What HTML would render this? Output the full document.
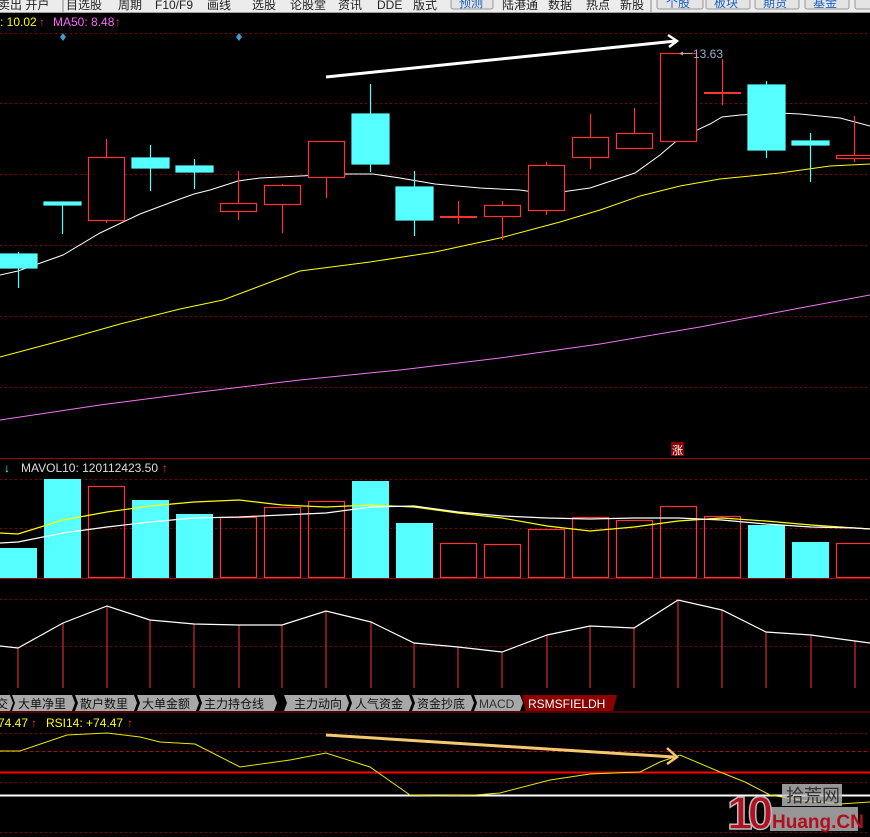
<!DOCTYPE html>
<html><head><meta charset="utf-8"><style>
html,body{margin:0;padding:0;background:#000;width:870px;height:837px;overflow:hidden}
svg{display:block}
text{font-family:"Liberation Sans","Noto Sans CJK SC",sans-serif}
</style></head><body>
<svg width="870" height="837" viewBox="0 0 870 837" xmlns="http://www.w3.org/2000/svg">
<rect width="870" height="837" fill="#000"/>
<!-- toolbar -->
<rect x="0" y="0" width="870" height="12" fill="#ececec"/>
<line x1="0" y1="12.5" x2="870" y2="12.5" stroke="#a0a0a0"/>
<g font-size="12" fill="#222">
<text x="-2" y="9">卖出 开户</text>
<text x="66" y="9">目选股</text><text x="118" y="9">周期</text><text x="155" y="9">F10/F9</text>
<text x="207" y="9">画线</text><text x="252" y="9">选股</text><text x="290" y="9">论股堂</text>
<text x="338" y="9">资讯</text><text x="377" y="9">DDE</text><text x="413" y="9">版式</text>
<text x="502" y="9">陆港通</text><text x="548" y="9">数据</text><text x="586" y="9">热点</text><text x="620" y="9">新股</text>
</g>
<line x1="63" y1="0" x2="63" y2="12" stroke="#888"/>
<line x1="651" y1="0" x2="651" y2="12" stroke="#888"/>
<g fill="#e4e4e4" stroke="#999">
<rect x="451" y="-4" width="42" height="13" rx="2"/>
<rect x="657" y="-4" width="46" height="13" rx="2"/>
<rect x="706" y="-4" width="44" height="13" rx="2"/>
<rect x="755" y="-4" width="44" height="13" rx="2"/>
<rect x="805" y="-4" width="44" height="13" rx="2"/>
<rect x="855" y="-4" width="20" height="13" rx="2"/>
</g>
<g font-size="12" fill="#1a5fc0">
<text x="459" y="7">预测</text><text x="666" y="7">个股</text><text x="714" y="7">板块</text>
<text x="763" y="7">期货</text><text x="813" y="7">基金</text>
</g>
<!-- main header -->
<text x="0" y="26" font-size="12" fill="#ffff00">: 10.02</text>
<text x="39" y="26" font-size="12" fill="#ff3333" font-weight="bold">↑</text>
<text x="53" y="26" font-size="12" fill="#ff66ff">MA50: 8.48</text>
<text x="115" y="26" font-size="12" fill="#ff3333" font-weight="bold">↑</text>
<!-- grid -->
<g stroke="#8b0000" stroke-dasharray="2,3" stroke-width="1">
<line x1="0" y1="33.5" x2="870" y2="33.5"/><line x1="0" y1="103.5" x2="870" y2="103.5"/>
<line x1="0" y1="174.5" x2="870" y2="174.5"/><line x1="0" y1="245.5" x2="870" y2="245.5"/>
<line x1="0" y1="316.5" x2="870" y2="316.5"/><line x1="0" y1="387.5" x2="870" y2="387.5"/>
<line x1="0" y1="479.5" x2="870" y2="479.5"/><line x1="0" y1="528.5" x2="870" y2="528.5"/>
<line x1="0" y1="599.5" x2="870" y2="599.5"/><line x1="0" y1="646.5" x2="870" y2="646.5"/>
<line x1="0" y1="733.5" x2="870" y2="733.5"/><line x1="0" y1="782.5" x2="870" y2="782.5"/>
<line x1="0" y1="832.5" x2="870" y2="832.5"/>
</g>
<line x1="0" y1="751.5" x2="870" y2="751.5" stroke="#cc0000" stroke-dasharray="3,3"/>
<!-- diamonds -->
<path d="M63 33l3 4-3 4-3-4z M239 33l3 4-3 4-3-4z" fill="#3aa0d0"/>
<!-- MA lines -->
<polyline fill="none" stroke="#ee77ee" stroke-width="1" points="0,420 100,405 200,392 300,380 400,370 500,358 600,344 700,327 800,308 870,295"/>
<polyline fill="none" stroke="#ffff00" stroke-width="1" points="0,357 60,341 120,324 180,309 223,300 300,271 370,262 435,252 500,238 560,222 600,210 640,196 680,186 720,179 780,173 830,166 870,164"/>
<polyline fill="none" stroke="#fff" stroke-width="1" points="0,275 18,271 63,255 100,233 140,214 180,199 194,194 210,190 238,181 260,178 300,176 340,174 373,174 400,178 435,184 480,188 520,190 547,194 590,188 635,173 660,155 680,138 710,124 722,117 740,115 780,113 800,114 840,118 870,126"/>
<!-- candles -->
<g stroke="#55ffff" stroke-width="1.2" fill="#55ffff">
<line x1="18.5" y1="252" x2="18.5" y2="288"/><rect x="0" y="254" width="37" height="14"/>
<line x1="62.5" y1="202" x2="62.5" y2="234"/><rect x="44" y="202" width="37" height="3"/>
<line x1="150.5" y1="145" x2="150.5" y2="191"/><rect x="132" y="158" width="37" height="10"/>
<line x1="194.5" y1="159" x2="194.5" y2="189"/><rect x="176" y="166" width="37" height="6"/>
<line x1="370.5" y1="84" x2="370.5" y2="172"/><rect x="352" y="114" width="37" height="50"/>
<line x1="414.5" y1="171" x2="414.5" y2="236"/><rect x="396" y="187" width="37" height="33"/>
<line x1="766.5" y1="81" x2="766.5" y2="158"/><rect x="748" y="85" width="37" height="65"/>
<line x1="810.5" y1="133" x2="810.5" y2="182"/><rect x="792" y="141" width="37" height="4"/>
</g>
<g stroke="#ff3333" stroke-width="1.2" fill="#000">
<line x1="106.5" y1="139" x2="106.5" y2="223"/><rect x="88.5" y="157.5" width="36" height="63"/>
<line x1="238.5" y1="171" x2="238.5" y2="220"/><rect x="220.5" y="203.5" width="36" height="8"/>
<line x1="282.5" y1="184" x2="282.5" y2="233"/><rect x="264.5" y="185.5" width="36" height="19"/>
<line x1="326.5" y1="177" x2="326.5" y2="198"/><rect x="308.5" y="141.5" width="36" height="36"/>
<line x1="458.5" y1="201" x2="458.5" y2="224"/><line x1="440" y1="217" x2="477" y2="217" stroke-width="2"/>
<line x1="502.5" y1="201" x2="502.5" y2="240"/><rect x="484.5" y="205.5" width="36" height="11"/>
<line x1="546.5" y1="162" x2="546.5" y2="215"/><rect x="528.5" y="165.5" width="36" height="45"/>
<line x1="590.5" y1="114" x2="590.5" y2="169"/><rect x="572.5" y="137.5" width="36" height="20"/>
<line x1="634.5" y1="108" x2="634.5" y2="133"/><rect x="616.5" y="133.5" width="36" height="15"/>
<rect x="660.5" y="53.5" width="36" height="88"/>
<line x1="722.5" y1="59" x2="722.5" y2="105"/><line x1="704" y1="93" x2="741" y2="93" stroke-width="2"/>
<line x1="854.5" y1="116" x2="854.5" y2="162"/><rect x="836.5" y="155.5" width="36" height="3"/>
</g>
<line x1="680" y1="53.5" x2="692" y2="53.5" stroke="#aaa"/><path d="M679 53.5l4-2v4z" fill="#aaa"/>
<text x="693" y="58" font-size="12" fill="#9ab0d0">13.63</text>
<!-- white arrow -->
<line x1="326" y1="77" x2="676" y2="41" stroke="#fff" stroke-width="3"/>
<polyline points="668,35 677,41 669,47" fill="none" stroke="#fff" stroke-width="2.5"/>
<!-- 涨 marker -->
<rect x="671" y="442" width="13" height="14" fill="#8b0000"/>
<text x="672" y="454" font-size="11" fill="#fff">涨</text>
<line x1="0" y1="458.5" x2="870" y2="458.5" stroke="#a00000"/>
<!-- volume header -->
<text x="4" y="472" font-size="12" fill="#55ffff" font-weight="bold">↓</text>
<text x="21" y="472" font-size="12" fill="#ddd">MAVOL10: 120112423.50</text>
<text x="162" y="472" font-size="12" fill="#ff3333" font-weight="bold">↑</text>
<!-- volume bars -->
<g fill="#55ffff">
<rect x="0" y="548" width="37" height="30"/><rect x="44" y="479" width="37" height="99"/>
<rect x="132" y="500" width="37" height="78"/><rect x="176" y="514" width="37" height="64"/>
<rect x="352" y="481" width="37" height="97"/><rect x="396" y="523" width="37" height="55"/>
<rect x="748" y="525" width="37" height="53"/><rect x="792" y="542" width="37" height="36"/>
</g>
<g fill="none" stroke="#ff3333" stroke-width="1.2">
<rect x="88.5" y="486.5" width="36" height="91"/><rect x="220.5" y="517.5" width="36" height="60"/>
<rect x="264.5" y="507.5" width="36" height="70"/><rect x="308.5" y="501.5" width="36" height="76"/>
<rect x="440.5" y="543.5" width="36" height="34"/><rect x="484.5" y="544.5" width="36" height="33"/>
<rect x="528.5" y="529.5" width="36" height="48"/><rect x="572.5" y="517.5" width="36" height="60"/>
<rect x="616.5" y="520.5" width="36" height="57"/><rect x="660.5" y="506.5" width="36" height="71"/>
<rect x="704.5" y="516.5" width="36" height="61"/><rect x="836.5" y="543.5" width="36" height="34"/>
</g>
<polyline fill="none" stroke="#ffff00" stroke-width="1.2" points="0,533 18,534 63,520 107,512 150,506 194,502 239,500 282,505 326,507 371,505 414,507 458,513 502,518 547,526 590,531 634,527 678,521 722,518 766,521 811,525 855,528 870,529"/>
<polyline fill="none" stroke="#fff" stroke-width="1.2" points="0,543 18,542 63,533 107,527 150,522 194,518 239,517 282,515 326,513 371,507 414,506 458,512 502,516 547,518 590,519 634,518 678,518 722,520 766,524 811,527 855,528 870,529"/>
<line x1="0" y1="578.5" x2="870" y2="578.5" stroke="#a00000"/>
<!-- lower indicator -->
<g stroke="#ff3333" stroke-width="1">
<line x1="18" y1="648" x2="18" y2="688"/><line x1="63" y1="623" x2="63" y2="688"/><line x1="107" y1="606" x2="107" y2="688"/>
<line x1="150" y1="620" x2="150" y2="688"/><line x1="194" y1="624" x2="194" y2="688"/><line x1="239" y1="625" x2="239" y2="688"/>
<line x1="282" y1="625" x2="282" y2="688"/><line x1="326" y1="611" x2="326" y2="688"/><line x1="371" y1="622" x2="371" y2="688"/>
<line x1="414" y1="643" x2="414" y2="688"/><line x1="458" y1="647" x2="458" y2="688"/><line x1="502" y1="652" x2="502" y2="688"/>
<line x1="547" y1="635" x2="547" y2="688"/><line x1="590" y1="626" x2="590" y2="688"/><line x1="634" y1="628" x2="634" y2="688"/>
<line x1="678" y1="600" x2="678" y2="688"/><line x1="722" y1="610" x2="722" y2="688"/><line x1="766" y1="632" x2="766" y2="688"/>
<line x1="811" y1="635" x2="811" y2="688"/><line x1="855" y1="641" x2="855" y2="688"/>
</g>
<polyline fill="none" stroke="#fff" stroke-width="1.2" points="0,646 18,648 63,623 107,606 150,620 194,624 239,625 282,625 326,611 371,622 414,643 458,647 502,652 547,635 590,626 634,628 678,600 722,610 766,632 811,635 855,641 870,643"/>
<!-- tabs -->
<rect x="0" y="694" width="870" height="17" fill="#000"/>
<g fill="#a8a8a8">
<polygon points="0,695 10,695 13,703 10,711 0,711"/>
<polygon points="12,695 72,695 75,703 72,711 12,711 15,703"/>
<polygon points="75,695 134,695 137,703 134,711 75,711 78,703"/>
<polygon points="137,695 196,695 199,703 196,711 137,711 140,703"/>
<polygon points="199,695 274,695 277,703 274,711 199,711 202,703"/>
<polygon points="284,695 346,695 349,703 346,711 284,711 287,703"/>
<polygon points="349,695 409,695 412,703 409,711 349,711 352,703"/>
<polygon points="412,695 471,695 474,703 471,711 412,711 415,703"/>
<polygon points="474,695 520,695 523,703 520,711 474,711 477,703"/>
</g>
<polygon points="522,695 617,695 613,711 526,711" fill="#8b0000"/>
<g font-size="12" fill="#111">
<text x="-4" y="708">交</text><text x="18" y="708">大单净里</text><text x="80" y="708">散户数里</text>
<text x="142" y="708">大单金额</text><text x="204" y="708">主力持仓线</text><text x="294" y="708">主力动向</text>
<text x="355" y="708">人气资金</text><text x="417" y="708">资金抄底</text><text x="479" y="708" fill="#333">MACD</text>
</g>
<text x="528" y="708" font-size="12" fill="#fff">RSMSFIELDH</text>
<line x1="0" y1="712" x2="870" y2="712" stroke="#a00000"/>
<!-- RSI -->
<text x="-2" y="727" font-size="12" fill="#ffff00">74.47</text>
<text x="31" y="727" font-size="12" fill="#ff3333" font-weight="bold">↑</text>
<text x="46" y="727" font-size="12" fill="#ffff00">RSI14: +74.47</text>
<text x="127" y="727" font-size="12" fill="#ff3333" font-weight="bold">↑</text>
<line x1="0" y1="772.5" x2="870" y2="772.5" stroke="#ff0000" stroke-width="2"/>
<line x1="0" y1="795.5" x2="870" y2="795.5" stroke="#fff" stroke-width="2"/>
<polyline fill="none" stroke="#e8e800" stroke-width="1" points="0,751 20,751 67,735 107,733 140,737 160,742 195,744 240,767 290,760 326,753 370,767 410,795 435,796 475,795 500,793 550,780 590,774 640,772 660,762 680,755 720,772 745,782 770,795 800,800 840,804 870,802"/>
<line x1="326" y1="735" x2="674" y2="757" stroke="#f5c870" stroke-width="3"/>
<polyline points="667,748 677,757 667,764" fill="none" stroke="#f5c870" stroke-width="2.5"/>
<!-- watermark -->
<g>
<rect x="782" y="784" width="60" height="22" fill="#bbb" opacity="0.8"/>
<text x="786" y="802" font-size="18" fill="#333" font-family="Noto Sans CJK SC, sans-serif">拾荒网</text>
<rect x="770" y="807" width="88" height="24" fill="#bbb" opacity="0.8"/>
<text x="772" y="828" font-size="19" fill="#b01020" font-weight="bold">Huang.CN</text>
<text x="727" y="829" font-size="46" fill="#b01020" font-weight="bold" stroke="#bbb" stroke-width="1.5" letter-spacing="-5">10</text>
</g>
</svg>
</body></html>
